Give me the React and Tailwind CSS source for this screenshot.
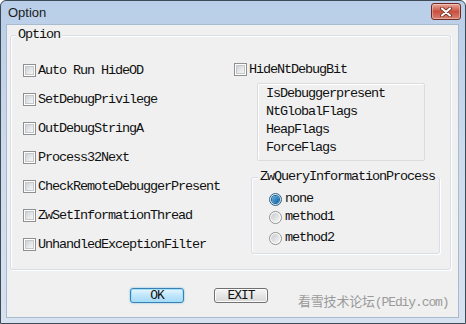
import React from "react";

const mono = "font-['Liberation_Mono','Courier_New',monospace] text-[13.5px] tracking-[-1.1px] text-[#111]";

function Check() {
  return (
    <div className="w-[13px] h-[13px] shrink-0 border border-[#8e8f8f] bg-white p-px">
      <div className="w-full h-full border border-[#c4c8cc] bg-gradient-to-br from-[#cfd2d6] to-[#f7f7f7]" />
    </div>
  );
}

function Radio({ on }) {
  if (on) {
    return (
      <div className="w-[13px] h-[13px] shrink-0 rounded-full border border-[#2c628b] bg-gradient-to-br from-[#e6f2fb] to-[#b8d6ee] flex items-center justify-center">
        <div className="w-[7px] h-[7px] rounded-full bg-gradient-to-br from-[#5fb3e8] to-[#0b5d9c] shadow-[0_0_0_1px_#1e5f8f]" />
      </div>
    );
  }
  return (
    <div className="w-[13px] h-[13px] shrink-0 rounded-full border border-[#8e8f8f] bg-white p-px">
      <div className="w-full h-full rounded-full bg-gradient-to-br from-[#c9cbce] to-[#f6f6f6]" />
    </div>
  );
}

function CheckRow({ label }) {
  return (
    <div className="h-[29px] flex items-center gap-[2px]">
      <Check />
      <span className={mono + " leading-[16px] whitespace-pre"}>{label}</span>
    </div>
  );
}

export default function App() {
  const left = [
    "Auto Run HideOD",
    "SetDebugPrivilege",
    "OutDebugStringA",
    "Process32Next",
    "CheckRemoteDebuggerPresent",
    "ZwSetInformationThread",
    "UnhandledExceptionFilter",
  ];
  return (
    <div className="w-[466px] h-[324px] overflow-hidden border border-[#3f4a57] rounded-t-[6px] bg-gradient-to-b from-[#b9cee8] via-[#cddbec] to-[#d6e2f0] flex flex-col">
      {/* title bar */}
      <div className="h-[24px] shrink-0 flex items-center justify-between pl-[7px] pr-[4px]">
        <span className="font-['Liberation_Sans',Arial,sans-serif] text-[13px] leading-[16px] text-[#1b1b1b]">Option</span>
        <div className="w-[30px] h-[17px] mt-[-3px] rounded-[3px] border border-[#6e2a22] bg-gradient-to-b from-[#e8a699] via-[#c9503f] to-[#d8806f] shadow-[inset_0_0_0_1px_rgba(255,255,255,0.35)] flex items-center justify-center">
          <svg width="12" height="10" viewBox="0 0 12 10">
            <path d="M2 1.5 L10 8.5 M10 1.5 L2 8.5" stroke="#5a1c14" strokeWidth="3.6" strokeLinecap="round" />
            <path d="M2 1.5 L10 8.5 M10 1.5 L2 8.5" stroke="#ffffff" strokeWidth="2.2" strokeLinecap="round" />
          </svg>
        </div>
      </div>

      {/* content */}
      <div className="ml-[6px] mr-[7px] h-[292px] shrink-0 bg-[#f0f0f0] pt-[10px] pl-[3px] shadow-[0_0_0_1px_#a9bbd0]">
        {/* group box */}
        <div className="relative w-[441px] h-[235px] border border-[#d5dfe5] rounded-[3px] shadow-[inset_1px_1px_0_#fff,1px_1px_0_#fff] flex">
          <span className={mono + " absolute left-[5px] -top-[9px] px-[2px] bg-[#f0f0f0] leading-[16px]"}>Option</span>

          {/* left column */}
          <div className="w-[223px] shrink-0 pl-[12px] pt-[20px] flex flex-col">
            {left.map((l) => (
              <CheckRow key={l} label={l} />
            ))}
          </div>

          {/* right column */}
          <div className="pt-[20px] flex flex-col">
            <div className="h-[27px] flex items-center gap-[2px]">
              <Check />
              <span className={mono + " leading-[16px]"}>HideNtDebugBit</span>
            </div>
            <div className="ml-[23px] w-[168px] h-[78px] border border-[#dcdcdc] rounded-[2px] shadow-[inset_1px_1px_0_#fff] pl-[8px] pt-[1px] flex flex-col">
              {["IsDebuggerpresent", "NtGlobalFlags", "HeapFlags", "ForceFlags"].map((t) => (
                <span key={t} className={mono + " leading-[18px]"}>{t}</span>
              ))}
            </div>
            <div className="relative ml-[17px] mt-[16px] w-[189px] h-[77px] border border-[#d5dfe5] rounded-[3px] shadow-[inset_1px_1px_0_#fff,1px_1px_0_#fff] pl-[17px] pt-[12px] flex flex-col">
              <span className={mono + " absolute left-[6px] -top-[9px] px-[2px] bg-[#f0f0f0] leading-[16px]"}>ZwQueryInformationProcess</span>
              <div className="h-[18px] flex items-center gap-[3px]">
                <Radio on />
                <span className={mono + " leading-[16px]"}>none</span>
              </div>
              <div className="h-[18px] flex items-center gap-[3px]">
                <Radio />
                <span className={mono + " leading-[16px]"}>method1</span>
              </div>
              <div className="h-[18px] mt-[3px] flex items-center gap-[3px]">
                <Radio />
                <span className={mono + " leading-[16px]"}>method2</span>
              </div>
            </div>
          </div>
        </div>

        {/* buttons row */}
        <div className="mt-[18px] pl-[120px] flex items-start">
          <div className="w-[54px] h-[15px] rounded-[3px] border border-[#3c7fb1] bg-gradient-to-b from-[#e8f6fd] via-[#bee6fd] to-[#a7d9f5] shadow-[inset_0_0_0_1px_#9fe0fb,0_0_2px_#5cb5e8] flex items-center justify-center">
            <span className={mono + " leading-[13px] text-[13px]"}>OK</span>
          </div>
          <div className="ml-[30px] w-[54px] h-[15px] rounded-[3px] border border-[#707070] bg-gradient-to-b from-[#f6f6f6] via-[#e6e6e6] to-[#d8d8d8] shadow-[inset_0_0_0_1px_#fcfcfc] flex items-center justify-center">
            <span className={mono + " leading-[13px] text-[13px]"}>EXIT</span>
          </div>
          <span className="ml-[30px] mt-[4px] leading-[16px] whitespace-nowrap text-[#9a9a9a]">
            <span className="font-['Noto_Sans_CJK_SC',sans-serif] text-[13px] tracking-[-0.2px]">看雪技术论坛</span>
            <span className="font-['Liberation_Mono',monospace] text-[13px] tracking-[-1.1px]">(PEdiy.com)</span>
          </span>
        </div>
      </div>
    </div>
  );
}
